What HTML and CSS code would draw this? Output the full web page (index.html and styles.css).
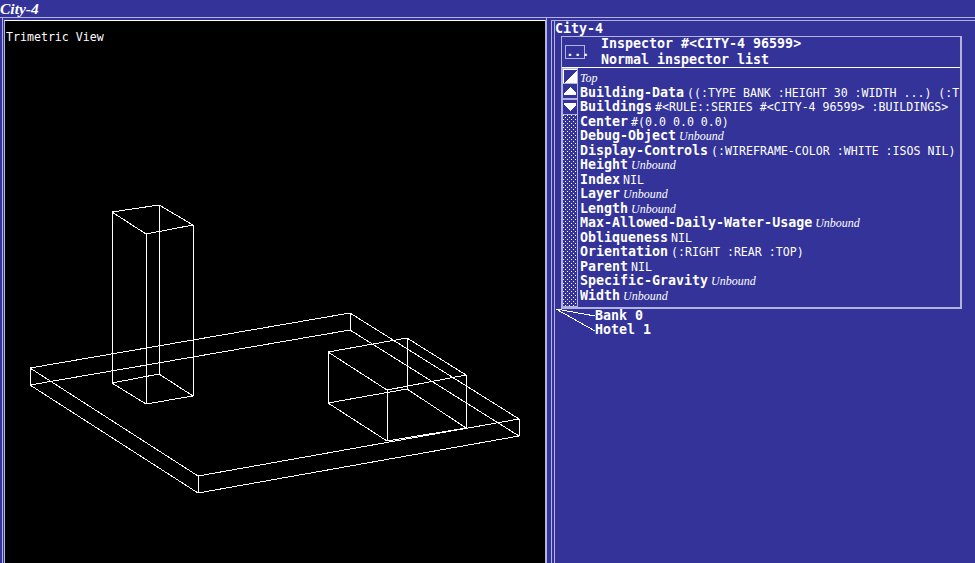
FILE: index.html
```html
<!DOCTYPE html>
<html>
	<head>
		<meta charset="utf-8">
		<title>City-4</title>
		<link rel="stylesheet" href="styles.css">
	</head>
	<body>
		<div class="titlebar">City-4</div>
		<div class="panes">
			<div class="pane-left">
				<div class="view">
					<div class="view-label">Trimetric View</div>
					<svg class="wire" viewBox="5 21 540 542" width="540" height="542">
						<!-- slab -->
						<path d="M30 368L350 313L519 419L198 476Z"/>
						<path d="M30 385L350 330L519 436L198 493Z"/>
						<path d="M30 368V385M350 313V330M519 419V436M198 476V493"/>
						<!-- tower -->
						<path d="M112 212L159 205L193 225L146 234Z"/>
						<path d="M112 383L159 374L193 396L146 404Z"/>
						<path d="M112 212V383M159 205V374M193 225V396M146 234V404"/>
						<!-- low building -->
						<path d="M328 352L407 338L466 375L387 390Z"/>
						<path d="M328 403L407 389L466 428L387 441Z"/>
						<path d="M328 352V403M407 338V389M466 375V428M387 390V441"/>
					</svg>
				</div>
			</div>
			<div class="pane-right">
				<div class="side">
					<div class="side-inner">
						<div class="side-title">City-4</div>
						<div class="inspector">
							<div class="insp-head">
								<div class="insp-btn">...</div>
								<div class="insp-text">
									<div>Inspector #&lt;CITY-4 96599&gt;</div>
									<div>Normal inspector list</div>
								</div>
							</div>
							<div class="insp-body">
								<div class="scroll">
									<div class="sbtn">
										<svg viewBox="0 0 14 14" width="14" height="14"><path d="M0 0H14V1H1V14H0Z"/><path d="M14 1V14H1Z"/></svg>
									</div>
									<div class="sbtn">
										<svg viewBox="0 0 14 14" width="14" height="14"><path d="M7 3L13 9V11H1V9Z"/></svg>
									</div>
									<div class="sbtn sbtn-down">
										<svg viewBox="0 0 14 14" width="14" height="14"><path d="M1 3H13V5L7 11L1 5Z"/></svg>
									</div>
									<div class="track">
										<svg width="14" height="191">
											<defs>
												<pattern id="dots" width="4" height="4" patternUnits="userSpaceOnUse">
													<rect x="0" y="0" width="1" height="1" fill="#fff"/>
													<rect x="2" y="2" width="1" height="1" fill="#fff"/>
												</pattern>
											</defs>
											<rect width="14" height="191" fill="url(#dots)"/>
										</svg>
									</div>
								</div>
								<div class="rows">
									<div class="row"><i>Top</i></div>
									<div class="row"><b>Building-Data</b><span>((:TYPE BANK :HEIGHT 30 :WIDTH ...) (:T</span></div>
									<div class="row"><b>Buildings</b><span>#&lt;RULE::SERIES #&lt;CITY-4 96599&gt; :BUILDINGS&gt;</span></div>
									<div class="row"><b>Center</b><span>#(0.0 0.0 0.0)</span></div>
									<div class="row"><b>Debug-Object</b><i>Unbound</i></div>
									<div class="row"><b>Display-Controls</b><span>(:WIREFRAME-COLOR :WHITE :ISOS NIL)</span></div>
									<div class="row"><b>Height</b><i>Unbound</i></div>
									<div class="row"><b>Index</b><span>NIL</span></div>
									<div class="row"><b>Layer</b><i>Unbound</i></div>
									<div class="row"><b>Length</b><i>Unbound</i></div>
									<div class="row"><b>Max-Allowed-Daily-Water-Usage</b><i>Unbound</i></div>
									<div class="row"><b>Obliqueness</b><span>NIL</span></div>
									<div class="row"><b>Orientation</b><span>(:RIGHT :REAR :TOP)</span></div>
									<div class="row"><b>Parent</b><span>NIL</span></div>
									<div class="row"><b>Specific-Gravity</b><i>Unbound</i></div>
									<div class="row"><b>Width</b><i>Unbound</i></div>
								</div>
							</div>
						</div>
						<div class="graph">
							<svg class="links" viewBox="0 0 40 24" width="40" height="24">
								<path d="M1 0L40 7M1 0L40 22"/>
							</svg>
							<div class="nodes">
								<div>Bank 0</div>
								<div>Hotel 1</div>
							</div>
						</div>
					</div>
				</div>
			</div>
		</div>
	</body>
</html>
```

FILE: styles.css
```css
html, body {
    margin: 0;
    height: 563px;
    overflow: hidden;
}
body {
    background: #333399;
    color: #fff;
    font-family: "DejaVu Sans Mono", "Liberation Mono", monospace;
    font-size: 13.3px;
}
.titlebar {
    height: 17px;
    line-height: 17px;
    font-family: "Liberation Serif", serif;
    font-style: italic;
    font-weight: bold;
    font-size: 15.5px;
}
.panes {
    display: grid;
    grid-template-columns: 547px 1fr;
    height: 546px;
    border-top: 1px solid #b3b3dd;
    box-sizing: border-box;
    padding-top: 2px;
}

/* left: the 3d view */
.pane-left {
    margin-left: 2px;
    border-left: 1px solid #b3b3dd;
    border-right: 1px solid #b3b3dd;
    padding-left: 1px;
    margin-top: -2px;
    padding-top: 2px;
}
.view {
    position: relative;
    height: 100%;
    box-sizing: border-box;
    background: #000;
    border-top: 1px solid #fff;
    border-left: 1px solid #b3b3dd;
    border-right: 1px solid #b3b3dd;
    padding: 9px 0 0 1px;
}
.view-label {
    font-size: 11.6px;
    line-height: 14px;
}
.wire {
    position: absolute;
    left: 0;
    top: 0;
}
.wire path {
    fill: none;
    stroke: #fff;
    stroke-width: 1;
    shape-rendering: crispEdges;
}

/* right: inspector */
.pane-right {
    padding-left: 4px;
    margin-top: -2px;
    padding-top: 2px;
}
.side {
    height: 100%;
    box-sizing: border-box;
    border-left: 1px solid #b3b3dd;
    border-top: 1px solid #b3b3dd;
    padding-left: 2px;
}
.side-inner {
    height: 100%;
    border-left: 1px solid #b3b3dd;
}
.side-title {
    height: 15px;
    line-height: 15px;
    font-weight: bold;
}
.inspector {
    margin-left: 6px;
    width: 401px;
    box-sizing: border-box;
    border-top: 1px solid #b3b3dd;
    border-left: 1px solid #b3b3dd;
    border-right: 2px solid #b3b3dd;
    border-bottom: 2px solid #b3b3dd;
}
.insp-head {
    display: flex;
    align-items: center;
    height: 30px;
    border-bottom: 1px solid #fff;
    padding-left: 3px;
}
.insp-btn {
    width: 18px;
    height: 12px;
    border: 1px solid #b3b3dd;
    font-size: 13px;
    font-weight: bold;
    line-height: 11px;
    text-align: center;
}
.insp-text {
    margin-left: 16px;
    font-weight: bold;
    line-height: 16px;
}
.insp-body {
    display: flex;
}
.scroll {
    width: 16px;
    flex: none;
    background: #b3b3dd;
    padding: 1px;
    box-sizing: border-box;
    display: flex;
    flex-direction: column;
    gap: 1px;
}
.sbtn, .track {
    background: #333399;
    line-height: 0;
}
.sbtn-down {
    margin-top: 1px;
}
.sbtn svg path {
    fill: #fff;
    shape-rendering: crispEdges;
}
.rows {
    flex: 1;
    min-width: 0;
    padding: 3px 0 0 2px;
}
.row {
    height: 14.5px;
    line-height: 14.5px;
    white-space: nowrap;
    overflow: hidden;
}
.row b {
    font-weight: bold;
    margin-right: 3px;
}
.row span {
    font-size: 11.6px;
}
.row i {
    font-family: "Liberation Serif", serif;
    font-style: italic;
    font-size: 12px;
}

/* graph under the inspector */
.graph {
    display: flex;
}
.links {
    flex: none;
}
.links path {
    fill: none;
    stroke: #fff;
    stroke-width: 1;
    shape-rendering: crispEdges;
}
.nodes {
    line-height: 14px;
    font-weight: bold;
}
```
